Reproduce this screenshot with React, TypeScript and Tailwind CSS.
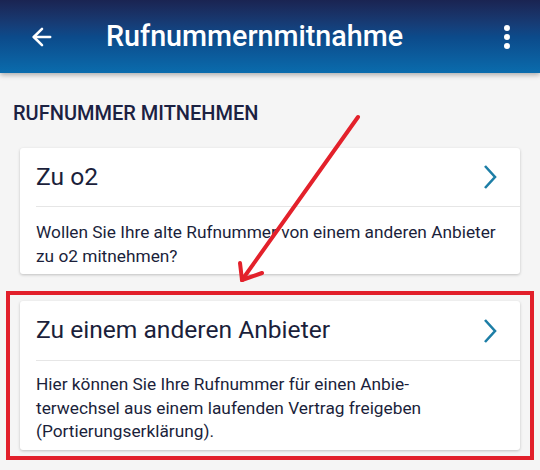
import { ArrowLeft } from "lucide-react";

type Option = {
  title: string;
  text: string[];
  highlight?: boolean;
};

const options: Option[] = [
  {
    title: "Zu o2",
    text: ["Wollen Sie Ihre alte Rufnummer von einem anderen Anbieter", "zu o2 mitnehmen?"],
  },
  {
    title: "Zu einem anderen Anbieter",
    text: [
      "Hier können Sie Ihre Rufnummer für einen Anbie-",
      "terwechsel aus einem laufenden Vertrag freigeben",
      "(Portierungserklärung).",
    ],
    highlight: true,
  },
];

const Chevron = () => (
  <svg width="16" height="28" viewBox="0 0 16 28" className="shrink-0">
    <path d="M3 3 L13 14 L3 25" fill="none" stroke="#1d7ea6" strokeWidth="2.6" />
  </svg>
);

const Card = ({ option }: { option: Option }) => (
  <div className="bg-white rounded-[3px] shadow-[0_1px_3px_rgba(0,0,0,0.22)]">
    <div className={`flex items-center justify-between pl-4 pr-[22px] ${option.highlight ? "h-[59px]" : "h-[58px]"}`}>
      <span className="text-[24.6px] text-[#1b1f3b]">{option.title}</span>
      <Chevron />
    </div>
    <div className="ml-4 border-t border-[#e6e6e6]" />
    <div className={`pl-4 pr-1 text-[17.3px] leading-[23.5px] text-[#1b1f3b] whitespace-nowrap ${option.highlight ? "pt-[12px] pb-[6px]" : "pt-[14px] pb-[6px]"}`}>
      {option.text.map((line, i) => (
        <div key={i}>{line}</div>
      ))}
    </div>
  </div>
);

const App = () => {
  return (
    <div className="relative w-[540px] h-[470px] overflow-hidden bg-[#f5f5f5] font-['Roboto',sans-serif]">
      <header className="relative z-10 h-[73px] flex items-center bg-gradient-to-b from-[#1a2452] via-[#0c4a8a] to-[#0a6cad] shadow-[0_2px_5px_rgba(0,0,0,0.3)] text-white">
        <div className="w-[106px] pl-[28px]">
          <ArrowLeft size={28} strokeWidth={2.2} />
        </div>
        <h1 className="text-[28.7px] font-medium">Rufnummernmitnahme</h1>
        <div className="ml-auto mr-[30px] flex flex-col gap-[3px]">
          <span className="w-[6px] h-[6px] rounded-full bg-white" />
          <span className="w-[6px] h-[6px] rounded-full bg-white" />
          <span className="w-[6px] h-[6px] rounded-full bg-white" />
        </div>
      </header>

      <div className="pl-[13px] pt-[28px] text-[20px] font-medium text-[#1b2142] leading-[25px]">
        RUFNUMMER MITNEHMEN
      </div>

      <div className="mt-[22px] px-[20px]">
        <Card option={options[0]} />
      </div>

      <div className="mt-[17px] mx-[6px] border-4 border-[#e2202b] px-[10px] py-[6px]">
        <Card option={options[1]} />
      </div>

      {/* annotation arrow */}
      <svg className="absolute left-0 top-0 pointer-events-none" width="540" height="470">
        <g stroke="#e3212b" strokeWidth="4" strokeLinecap="round" fill="none">
          <line x1="358" y1="117" x2="242" y2="280" />
          <line x1="242" y1="280" x2="240" y2="263" />
          <line x1="242" y1="280" x2="262" y2="273" />
        </g>
      </svg>
    </div>
  );
};

export default App;
